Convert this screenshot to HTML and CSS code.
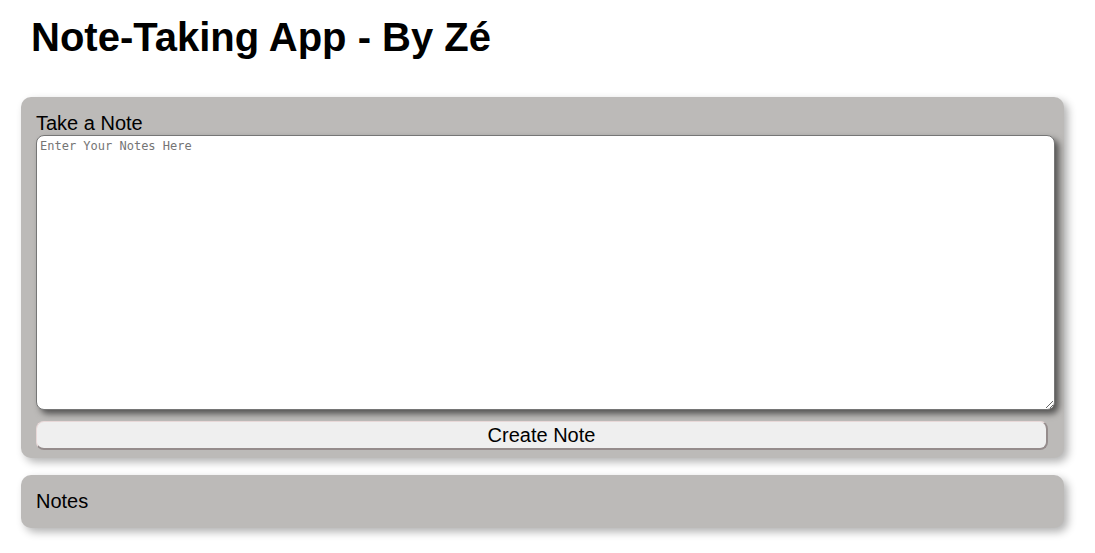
FILE: index.html
```html
<!DOCTYPE html>
<html lang="en">
<head>
<meta charset="utf-8">
<title>Note-Taking App</title>
<link rel="stylesheet" href="styles.css">
</head>
<body>
<main class="app">
  <h1 class="title">Note-Taking App - By Zé</h1>
  <section class="panel panel-create">
    <label class="panel-label" for="note">Take a Note</label>
    <textarea id="note" class="note-input" placeholder="Enter Your Notes Here"></textarea>
    <button class="create-btn" type="button">Create Note</button>
  </section>
  <section class="panel panel-notes">
    <div class="panel-label">Notes</div>
  </section>
</main>
</body>
</html>
```

FILE: styles.css
```css
html, body {
  margin: 0;
  padding: 0;
  background: #ffffff;
}

body {
  font-family: "Liberation Sans", Arial, sans-serif;
  color: #000;
}

.app {
  width: 1043px;
  padding: 14px 0 24px 21px;
  display: flex;
  flex-direction: column;
}

.title {
  margin: 0 0 37px 10px;
  font-size: 40px;
  line-height: 46px;
  font-weight: bold;
}

.panel {
  background: #bcbab8;
  border-radius: 10px;
  box-shadow: 4px 4px 8px rgba(0, 0, 0, 0.3);
  display: flex;
  flex-direction: column;
}

.panel-create {
  padding: 15px 15px 8px 15px;
}

.panel-notes {
  margin-top: 17px;
  padding: 15px 15px 15px 15px;
}

.panel-label {
  font-size: 20px;
  line-height: 23px;
}

.note-input {
  width: 1019px;
  height: 275px;
  box-sizing: border-box;
  padding: 3px 3px;
  border: 1px solid #767676;
  border-radius: 8px;
  background: #fff;
  font-family: "DejaVu Sans Mono", monospace;
  font-size: 12px;
  box-shadow: 4px 4px 6px rgba(0, 0, 0, 0.55);
  resize: both;
}

.note-input::placeholder {
  color: #757575;
}

.create-btn {
  margin-top: 11px;
  width: 1012px;
  height: 29px;
  padding: 1px 6px;
  font-family: "Liberation Sans", Arial, sans-serif;
  font-size: 20px;
  line-height: 23px;
  background: #efefef;
  border-style: solid;
  border-width: 1px 2px 2px 1px;
  border-color: #e8d8d8 #958c8c #958c8c #e8d8d8;
  border-radius: 8px;
  color: #000;
}
```
